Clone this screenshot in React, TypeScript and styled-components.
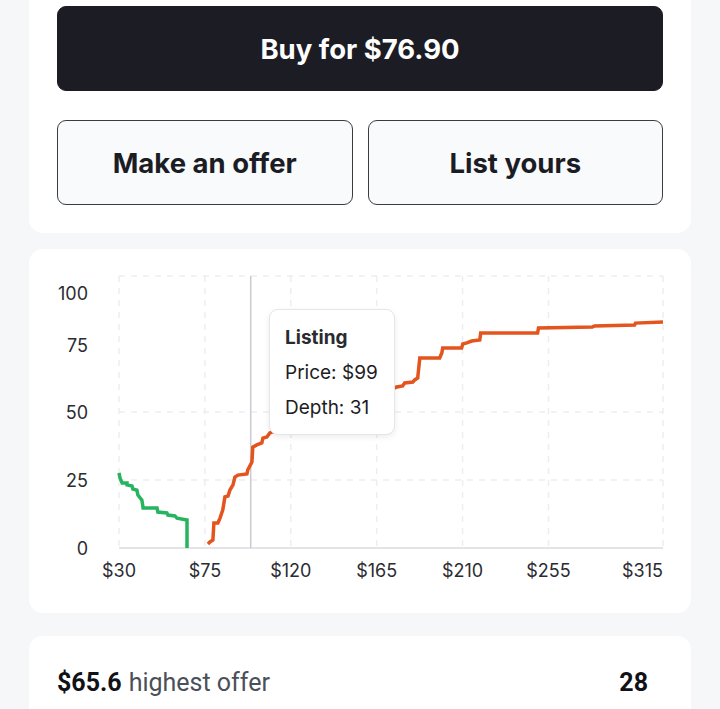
import React from "react";
import styled, { createGlobalStyle } from "styled-components";

const GlobalStyle = createGlobalStyle`
  html, body {
    margin: 0;
    padding: 0;
    background: #f6f7f9;
  }
  body {
    font-family: Inter, "Noto Sans", sans-serif;
    color: #1c1d24;
  }
`;

const Page = styled.div`
  width: 720px;
  margin-top: -22px;
  padding: 0 29px;
  box-sizing: border-box;
  display: flex;
  flex-direction: column;
`;

const Card = styled.section<{ $gap?: number }>`
  background: #ffffff;
  border-radius: 14px;
  margin-bottom: ${(p) => p.$gap ?? 16}px;
  position: relative;
`;

const ActionBody = styled.div`
  padding: 28px;
  display: flex;
  flex-direction: column;
  gap: 29px;
`;

const ButtonRow = styled.div`
  display: grid;
  grid-template-columns: 1fr 1fr;
  gap: 15px;
`;

const Button = styled.button<{ $primary?: boolean }>`
  height: 85px;
  border-radius: 9px;
  border: 1px solid ${(p) => (p.$primary ? "#1c1d24" : "#3b3c42")};
  background: ${(p) => (p.$primary ? "#1c1d24" : "#f9fafc")};
  color: ${(p) => (p.$primary ? "#ffffff" : "#1c1d24")};
  font-family: Inter, "Noto Sans", sans-serif;
  font-weight: 700;
  font-size: 27.5px;
  cursor: pointer;
`;

const ChartWrap = styled.div`
  height: 364px;
  position: relative;
`;

const Tooltip = styled.div`
  position: absolute;
  left: 240px;
  top: 60px;
  width: 126px;
  height: 126px;
  box-sizing: border-box;
  padding: 10px 0 0 15px;
  background: #ffffff;
  border: 1px solid #e4e6ea;
  border-radius: 9px;
  box-shadow: 0 2px 6px rgba(0, 0, 0, 0.08);
  display: flex;
  flex-direction: column;
`;

const TipLine = styled.div<{ $bold?: boolean }>`
  font-size: 19px;
  line-height: 35px;
  font-weight: ${(p) => (p.$bold ? 700 : 400)};
  color: ${(p) => (p.$bold ? "#2a2b30" : "#1c1d24")};
`;

const StatRow = styled.div`
  padding: 32px 43px 28px 28px;
  display: flex;
  align-items: center;
  justify-content: space-between;
  font-family: Roboto, "Liberation Sans", sans-serif;
  font-size: 25px;
`;

const StatLabel = styled.span`
  color: #4a4f5a;
`;

const StatValue = styled.b`
  color: #111217;
  font-weight: 700;
  margin-right: 7px;
`;

const StatCount = styled.b`
  color: #111217;
  font-weight: 700;
`;

// chart geometry, card-local pixels
const X0 = 90;
const X1 = 634;
const Y0 = 299;
const PMIN = 30;
const PMAX = 315;
const px = (p: number) => X0 + ((p - PMIN) * (X1 - X0)) / (PMAX - PMIN);
const py = (d: number) => Y0 - d * 2.72;

const bids: [number, number][] = [
  [30, 27.6], [30.5, 25.7], [31.6, 23.9], [34.2, 23.9], [34.2, 23.2], [36.8, 22.8],
  [37.3, 21.7], [39.4, 21.3], [39.9, 19.5], [42, 17.6], [42.6, 14.7], [49.9, 14.7],
  [50.4, 13.2], [55.1, 12.9], [55.6, 12.1], [59.3, 11.8], [60.4, 11.0], [65.6, 10.3],
  [65.6, 0],
];

const asks: [number, number][] = [
  [76.6, 1.5], [77.6, 2.2], [79.2, 2.9], [79.7, 9.2], [81.8, 9.2], [82.9, 11.0],
  [84.4, 14.0], [85.5, 18.8], [87.1, 19.1], [88.1, 21.3], [89.7, 23.2], [90.7, 26.1],
  [92.3, 26.8], [97, 27.2], [97.5, 28.7], [99.6, 31.6], [100.1, 37.1], [102.2, 37.9],
  [104.8, 38.6], [105.4, 40.4], [107.5, 40.8], [109, 42.3], [120, 45], [140, 50],
  [160, 55], [175.5, 59.2], [178.6, 59.6], [179.7, 60.7], [183.9, 61], [184.9, 61.8],
  [186.5, 62.5], [187.6, 69.9], [198, 69.9], [199.1, 71.7], [199.6, 73.5], [209.5, 73.5],
  [210.1, 75], [212.2, 75.4], [214.8, 76.1], [219, 76.5], [219.5, 79], [249.3, 79],
  [249.8, 80.9], [278.1, 81.3], [279.1, 81.6], [300.1, 82], [300.6, 82.7], [315, 83.1],
];

const xTicks = [30, 75, 120, 165, 210, 255, 315];
const yGrid = [100, 50, 25];
const yLabels: [string, number][] = [
  ["100", 44], ["75", 96], ["50", 163], ["25", 231], ["0", 299],
];

const toPoints = (data: [number, number][]) =>
  data.map(([p, d]) => `${px(p).toFixed(1)},${py(d).toFixed(1)}`).join(" ");

function DepthChart() {
  return (
    <svg width="662" height="364" viewBox="0 0 662 364" style={{ display: "block" }}>
      {xTicks.map((t) => (
        <line key={t} x1={px(t)} x2={px(t)} y1={py(100)} y2={Y0}
          stroke="#eceef1" strokeWidth="1.5" strokeDasharray="6 6" />
      ))}
      {yGrid.map((d) => (
        <line key={d} x1={X0} x2={X1} y1={py(d)} y2={py(d)}
          stroke="#eceef1" strokeWidth="1.5" strokeDasharray="6 6" />
      ))}
      <line x1={X0} x2={X1} y1={Y0} y2={Y0} stroke="#e2e4e8" strokeWidth="2" />
      <line x1={px(99)} x2={px(99)} y1={py(100)} y2={Y0} stroke="#c9cbcf" strokeWidth="1.5" />

      <polyline points={toPoints(bids)} fill="none" stroke="#27b45f" strokeWidth="3.5" />
      <polyline points={toPoints(asks)} fill="none" stroke="#e3541e" strokeWidth="3.5" />

      <g fontFamily="Inter, 'Noto Sans', sans-serif" fontSize="18" fill="#2b2c31">
        {yLabels.map(([l, y]) => (
          <text key={l} x={59} y={y} textAnchor="end" dominantBaseline="central">{l}</text>
        ))}
        {xTicks.map((t, i) => (
          <text key={t} x={px(t)} y={321}
            textAnchor={i === xTicks.length - 1 ? "end" : "middle"}
            dominantBaseline="central">${t}</text>
        ))}
      </g>
    </svg>
  );
}

export default function App() {
  return (
    <>
      <GlobalStyle />
      <Page>
        <Card $gap={16}>
          <ActionBody>
            <Button $primary>Buy for $76.90</Button>
            <ButtonRow>
              <Button>Make an offer</Button>
              <Button>List yours</Button>
            </ButtonRow>
          </ActionBody>
        </Card>

        <Card $gap={23}>
          <ChartWrap>
            <DepthChart />
            <Tooltip>
              <TipLine $bold>Listing</TipLine>
              <TipLine>Price: $99</TipLine>
              <TipLine>Depth: 31</TipLine>
            </Tooltip>
          </ChartWrap>
        </Card>

        <Card $gap={0}>
          <StatRow>
            <span>
              <StatValue>$65.6</StatValue>
              <StatLabel>highest offer</StatLabel>
            </span>
            <StatCount>28</StatCount>
          </StatRow>
        </Card>
      </Page>
    </>
  );
}
